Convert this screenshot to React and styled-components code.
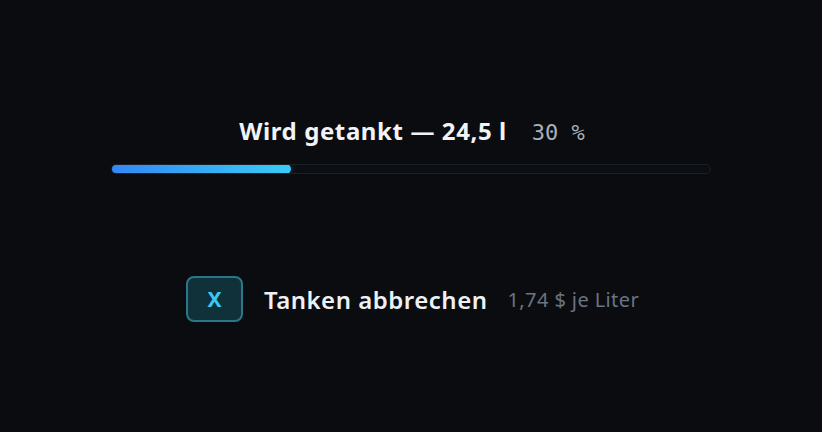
import React from "react";
import styled, { createGlobalStyle } from "styled-components";

const Global = createGlobalStyle`
  html, body { margin: 0; padding: 0; background: #0a0c10; }
  body { font-family: "Noto Sans", "Open Sans", sans-serif; }
  #root { width: 822px; height: 432px; }
`;

const Page = styled.div`
  width: 822px;
  height: 432px;
  box-sizing: border-box;
  padding-top: 115px;
  display: flex;
  flex-direction: column;
  align-items: center;
  background: #0a0c10;
`;

const Progress = styled.section`
  width: 600px;
  display: flex;
  flex-direction: column;
  align-items: center;
  gap: 15px;
`;

const Heading = styled.div`
  display: flex;
  align-items: baseline;
  gap: 25px;
  line-height: 32px;
  margin-left: 2px;
`;

const Title = styled.span`
  font-size: 24px;
  font-weight: 700;
  color: #f1f3f6;
  letter-spacing: 0.6px;
`;

const Percent = styled.span`
  font-family: "DejaVu Sans Mono", monospace;
  font-size: 22px;
  color: #a9b0bb;
`;

const Track = styled.div`
  width: 600px;
  height: 10px;
  box-sizing: border-box;
  border: 1px solid #1b2028;
  border-radius: 5px;
  background: #0b0e13;
  overflow: hidden;
`;

const Fill = styled.div`
  margin: -1px 0 0 -1px;
  height: 10px;
  border-radius: 5px;
  background: linear-gradient(90deg, #3388f5, #38ccf5);
  box-shadow: 0 0 10px rgba(56, 200, 245, 0.25);
`;

const Actions = styled.div`
  margin-top: 102px;
  margin-left: 3px;
  display: flex;
  align-items: center;
`;

const CancelButton = styled.button`
  width: 57px;
  height: 46px;
  box-sizing: border-box;
  border: 2px solid #2b7789;
  border-radius: 8px;
  background: #10303a;
  color: #3cc8f2;
  font-family: "Noto Sans", sans-serif;
  font-size: 21px;
  font-weight: 700;
  display: flex;
  align-items: center;
  justify-content: center;
  padding: 0;
  margin-right: 21px;
`;

const ActionLabel = styled.span`
  font-size: 24px;
  font-weight: 600;
  color: #eef1f4;
  letter-spacing: 0.5px;
  margin-right: 20px;
`;

const Price = styled.span`
  font-size: 20px;
  color: #6b7482;
  letter-spacing: 0.4px;
`;

export default function App() {
  const pct = 30;
  return (
    <>
      <Global />
      <Page>
        <Progress>
          <Heading>
            <Title>Wird getankt — 24,5 l</Title>
            <Percent>{pct} %</Percent>
          </Heading>
          <Track>
            <Fill style={{ width: `calc(${pct}% + 1px)` }} />
          </Track>
        </Progress>
        <Actions>
          <CancelButton>X</CancelButton>
          <ActionLabel>Tanken abbrechen</ActionLabel>
          <Price>1,74 $ je Liter</Price>
        </Actions>
      </Page>
    </>
  );
}
